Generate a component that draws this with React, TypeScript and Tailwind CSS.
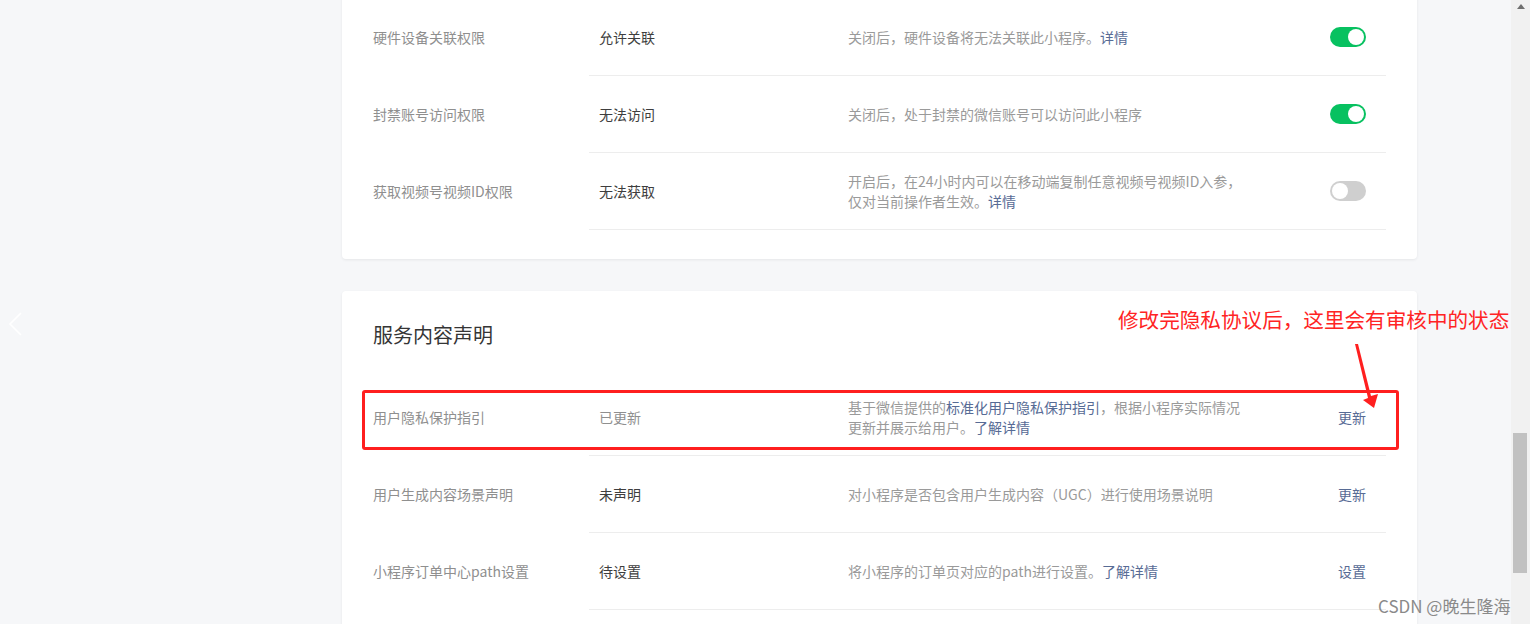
import type { ReactNode } from "react";

const font = { fontFamily: '"Noto Sans CJK SC", "Liberation Sans", sans-serif' };

const Link = ({ children }: { children: ReactNode }) => (
	<span className="text-[#576b95]">{children}</span>
);

const Toggle = ({ on }: { on: boolean }) => (
	<div
		className={`w-[36px] h-[20px] rounded-full flex items-center px-[2px] ${
			on ? "bg-[#07c160] justify-end" : "bg-[#cfcfcf] justify-start"
		}`}
	>
		<div className="w-[16px] h-[16px] rounded-full bg-white" />
	</div>
);

type RowProps = {
	label: string;
	value: string;
	valueMuted?: boolean;
	desc: ReactNode;
	right: ReactNode;
};

const Row = ({ label, value, valueMuted, desc, right }: RowProps) => (
	<div className="flex">
		<div className="w-[216px] shrink-0 flex items-center pb-px text-[14px] text-[#8f8f8f]">{label}</div>
		<div className="flex-1 h-[77px] flex items-center border-b border-[#ededed] pl-[10px] pr-[20px]">
			<div className={`w-[249px] shrink-0 text-[14px] ${valueMuted ? "text-[#8f8f8f]" : "text-[#3e3e3e]"}`}>
				{value}
			</div>
			<div className="flex-1 text-[14px] leading-[20px] text-[#9a9a9a]">{desc}</div>
			<div className="shrink-0 text-[14px] text-[#576b95]">{right}</div>
		</div>
	</div>
);

export default function App() {
	return (
		<div className="relative h-[624px] w-[1530px] overflow-hidden bg-[#f6f7f9]" style={font}>
			<div className="ml-[342px] w-[1075px]">
				{/* permissions card, scrolled past its top */}
				<section className="-mt-[30px] pt-[30px] pb-[29px] px-[31px] bg-white rounded-[4px] shadow-[0_1px_3px_rgba(0,0,0,0.07)]">
					<div className="-mt-px">
						<Row
							label="硬件设备关联权限"
							value="允许关联"
							desc={
								<>
									关闭后，硬件设备将无法关联此小程序。<Link>详情</Link>
								</>
							}
							right={<Toggle on />}
						/>
						<Row
							label="封禁账号访问权限"
							value="无法访问"
							desc="关闭后，处于封禁的微信账号可以访问此小程序"
							right={<Toggle on />}
						/>
						<Row
							label="获取视频号视频ID权限"
							value="无法获取"
							desc={
								<>
									开启后，在24小时内可以在移动端复制任意视频号视频ID入参，
									<br />
									仅对当前操作者生效。<Link>详情</Link>
								</>
							}
							right={<Toggle on={false} />}
						/>
					</div>
				</section>

				<section className="mt-[32px] pt-[30px] pb-[20px] px-[31px] bg-white rounded-[4px] shadow-[0_1px_3px_rgba(0,0,0,0.07)]">
					<h2 className="text-[20px] leading-[28px] text-[#353535]">服务内容声明</h2>
					<div className="mt-[30px]">
						<Row
							label="用户隐私保护指引"
							value="已更新"
							valueMuted
							desc={
								<>
									基于微信提供的<Link>标准化用户隐私保护指引</Link>，根据小程序实际情况
									<br />
									更新并展示给用户。<Link>了解详情</Link>
								</>
							}
							right="更新"
						/>
						<Row
							label="用户生成内容场景声明"
							value="未声明"
							desc="对小程序是否包含用户生成内容（UGC）进行使用场景说明"
							right="更新"
						/>
						<Row
							label="小程序订单中心path设置"
							value="待设置"
							desc={
								<>
									将小程序的订单页对应的path进行设置。<Link>了解详情</Link>
								</>
							}
							right="设置"
						/>
					</div>
				</section>
			</div>

			{/* scrollbar */}
			<div className="absolute right-0 top-0 h-full w-[19px] bg-[#f1f1f1]">
				<svg className="absolute left-[6px] top-[4px]" width="8" height="5" viewBox="0 0 8 5">
					<polygon points="0,5 4,0 8,5" fill="#6f6f6f" />
				</svg>
				<div className="absolute left-[2px] top-[433px] w-[14px] h-[140px] bg-[#c1c1c1]" />
			</div>

			{/* annotation */}
			<div className="absolute left-[362px] top-[390px] w-[1037px] h-[60px] border-[3px] border-[#ff1f1f] rounded-[3px]" />
			<div className="absolute left-[1118px] top-[304px] text-[20.6px] leading-[30px] text-[#ff2424] whitespace-nowrap">
				修改完隐私协议后，这里会有审核中的状态
			</div>
			<svg className="absolute inset-0 pointer-events-none" width="1530" height="624" viewBox="0 0 1530 624">
				<polygon
					points="1355,344 1358,344 1371,396 1378,394 1374,408 1363,400 1368,398"
					fill="#ff1f1f"
				/>
				<polyline points="21,313 10,324 21,335" fill="none" stroke="#ffffff" strokeWidth="1.6" />
			</svg>

			<div className="absolute left-[1378px] top-[594px] text-[17px] leading-[24px] text-[#8a8a8a] whitespace-nowrap">
				CSDN @晚生隆海
			</div>
		</div>
	);
}
